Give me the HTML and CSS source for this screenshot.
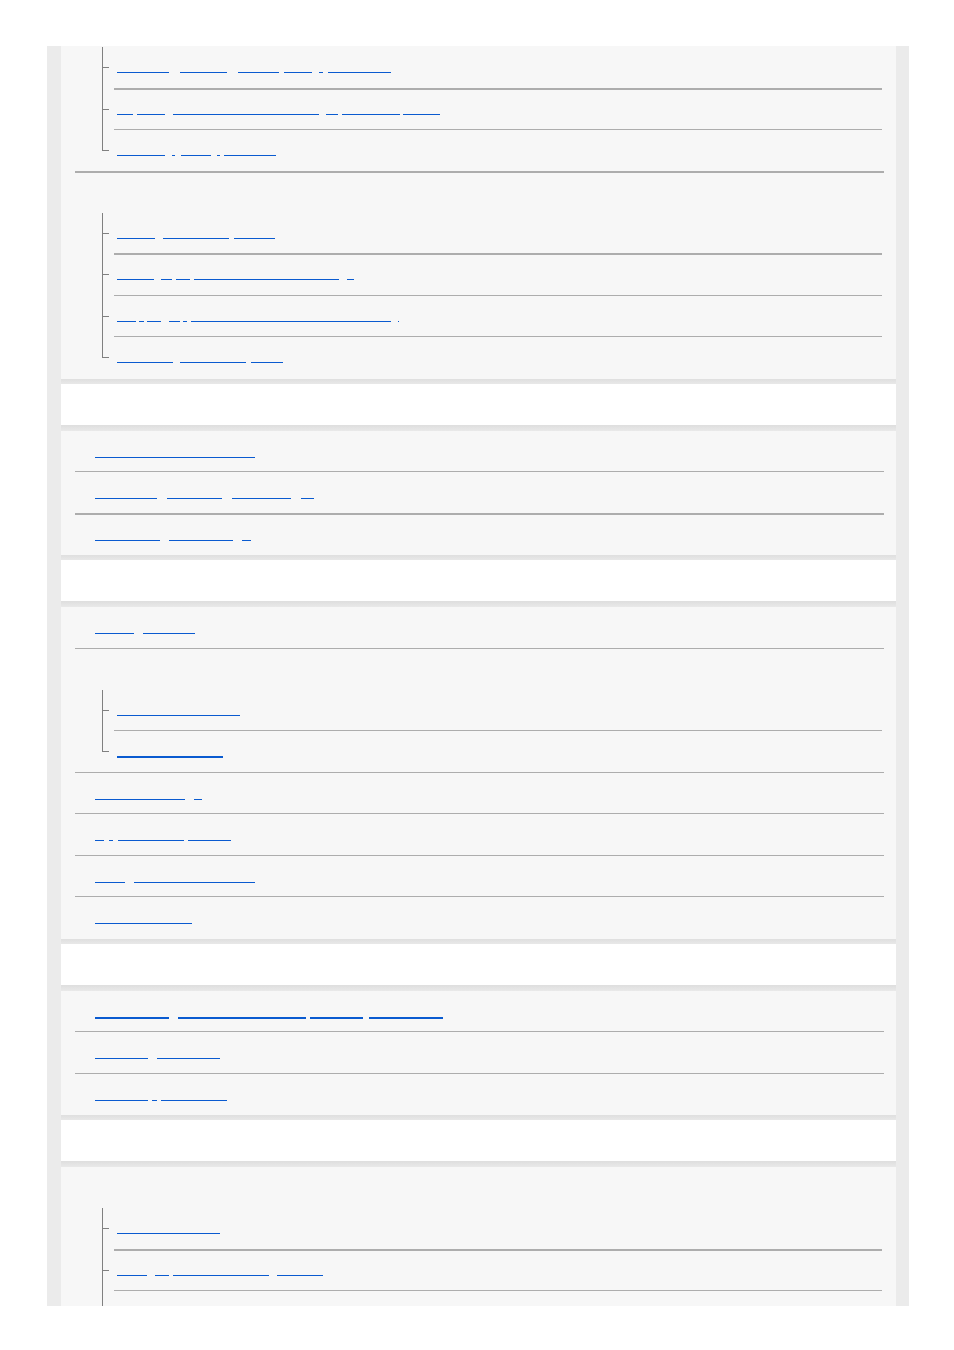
FILE: index.html
```html
<!DOCTYPE html>
<html lang="en">
<head>
  <meta charset="UTF-8">
  <meta name="viewport" content="width=device-width, initial-scale=1.0">
  <title>Help Guide - Contents</title>
  <link rel="stylesheet" href="styles.css">
</head>
<body>

  <div class="frame" id="frame"></div>

  <script>
    // Each link is a list of underline runs [x1, x2] in page pixels.
    // sep: "thick" draws the heavier rule under the row, bold: heavier underline.
    const PAGE = [
      { panel: [
        { children: [
          { segs: [[117,169],[180,227],[238,279],[284,312],[319,323],[328,391]], sep: "thick" },
          { segs: [[117,133],[137,165],[173,319],[326,338],[342,400],[403,440]] },
          { segs: [[117,165],[172,175],[181,211],[217,220],[224,276]] }
        ], sep: "thick" },
        { label: true, children: [
          { segs: [[117,155],[163,229],[234,275]], sep: "thick" },
          { segs: [[117,154],[161,172],[176,190],[194,339],[347,354]] },
          { segs: [[117,136],[139,144],[147,161],[169,180],[183,187],[191,391],[398,399]] },
          { segs: [[117,173],[180,246],[251,283]] }
        ] }
      ] },
      { header: true },
      { panel: [
        { segs: [[95,255]] },
        { segs: [[95,157],[167,222],[232,291],[301,314]], sep: "thick" },
        { segs: [[95,160],[169,233],[242,251]] }
      ] },
      { header: true },
      { panel: [
        { segs: [[95,134],[143,195]] },
        { label: true, children: [
          { segs: [[117,240]] },
          { segs: [[117,223]], bold: true }
        ] },
        { segs: [[95,185],[194,202]] },
        { segs: [[95,104],[109,113],[118,184],[188,231]] },
        { segs: [[95,125],[134,255]] },
        { segs: [[95,192]] }
      ] },
      { header: true },
      { panel: [
        { segs: [[95,169],[178,306],[310,363],[369,443]], bold: true },
        { segs: [[95,148],[157,220]] },
        { segs: [[95,148],[152,157],[161,227]] }
      ] },
      { header: true },
      { panel: [
        { label: true, children: [
          { segs: [[117,220]], sep: "thick" },
          { segs: [[117,147],[155,169],[173,269],[277,323]] },
          { segs: [[117,198],[205,260]] },
          { segs: [[117,240]] }
        ] }
      ] }
    ];

    function makeLink(item, start) {
      const a = document.createElement("a");
      a.href = "#";
      a.className = "link";
      let x = start;
      item.segs.forEach(([x1, x2]) => {
        const s = document.createElement("span");
        s.className = item.bold ? "seg bold" : "seg";
        s.style.marginLeft = (x1 - x) + "px";
        s.style.width = (x2 - x1) + "px";
        a.appendChild(s);
        x = x2;
      });
      return a;
    }

    function makeRow(item, start) {
      const row = document.createElement("div");
      row.className = item ? "row" : "row label";
      if (item && item.segs) row.appendChild(makeLink(item, start));
      return row;
    }

    const frame = document.getElementById("frame");
    PAGE.forEach(block => {
      if (block.header) {
        const head = document.createElement("div");
        head.className = "head";
        frame.appendChild(head);
        return;
      }
      const panel = document.createElement("div");
      panel.className = "panel";
      const list = document.createElement("ul");
      list.className = "toc";
      block.panel.forEach(item => {
        const li = document.createElement("li");
        li.className = item.sep === "thick" ? "top thick" : "top";
        if (item.children) {
          if (item.label) li.appendChild(makeRow(null, 95));
          const sub = document.createElement("ul");
          sub.className = "sub";
          item.children.forEach(child => {
            const cli = document.createElement("li");
            const row = makeRow(child, 117);
            if (child.sep === "thick") row.classList.add("thick");
            cli.appendChild(row);
            sub.appendChild(cli);
          });
          li.appendChild(sub);
        } else {
          li.appendChild(makeRow(item, 95));
        }
        list.appendChild(li);
      });
      panel.appendChild(list);
      frame.appendChild(panel);
    });
  </script>

</body>
</html>
```

FILE: styles.css
```css
body {
  margin: 0;
  background-color: #fff;
  font-family: "Liberation Sans", Arial, sans-serif;
}
.frame {
  margin: 46px 0 0 47px;
  width: 862px;
  height: 1260px;
  box-sizing: border-box;
  padding: 0 13px 0 14px;
  background-color: #ebebeb;
  overflow: hidden;
}
.panel {
  background-color: #f7f7f7;
}
.panel:first-child {
  padding-top: 1px;
}
.head {
  height: 41px;
  padding: 5px 0 6px;
  background:
    linear-gradient(#dfdfdf, #e8e8e8) top / 100% 5px no-repeat,
    linear-gradient(#dedede, #e9e9e9) bottom / 100% 6px no-repeat,
    #fff;
}
ul {
  list-style: none;
  margin: 0;
  padding: 0;
}
.toc {
  margin: 0 12px 0 14px;
}
.toc > li {
  border-bottom: 1px solid #adadad;
}
.toc > li:last-child {
  border-bottom-color: transparent;
}
.thick {
  box-shadow: 0 1px 0 #adadad;
}
.toc > li:last-child.thick {
  box-shadow: none;
}
.row {
  box-sizing: border-box;
  height: 40.5px;
  padding: 26px 0 0 20px;
}
.row.label {
  height: 41px;
}
.sub {
  margin-right: 2px;
}
.sub li {
  padding-left: 39px;
  background:
    linear-gradient(#808080, #808080) 27px 0 / 1px 100% no-repeat,
    linear-gradient(#808080, #808080) 27px 20px / 7px 1px no-repeat;
}
.sub li:last-child {
  background:
    linear-gradient(#808080, #808080) 27px 0 / 1px 21px no-repeat,
    linear-gradient(#808080, #808080) 27px 20px / 7px 1px no-repeat;
}
.sub .row {
  height: 41.5px;
  padding: 25px 0 0 3px;
  border-bottom: 1px solid #adadad;
}
.sub li:last-child .row {
  height: 40.5px;
  border-bottom: 0;
}
.link {
  display: flex;
  text-decoration: none;
}
.seg {
  display: block;
  height: 1px;
  background-color: #0a5bd0;
}
.seg.bold {
  height: 2px;
}
```
